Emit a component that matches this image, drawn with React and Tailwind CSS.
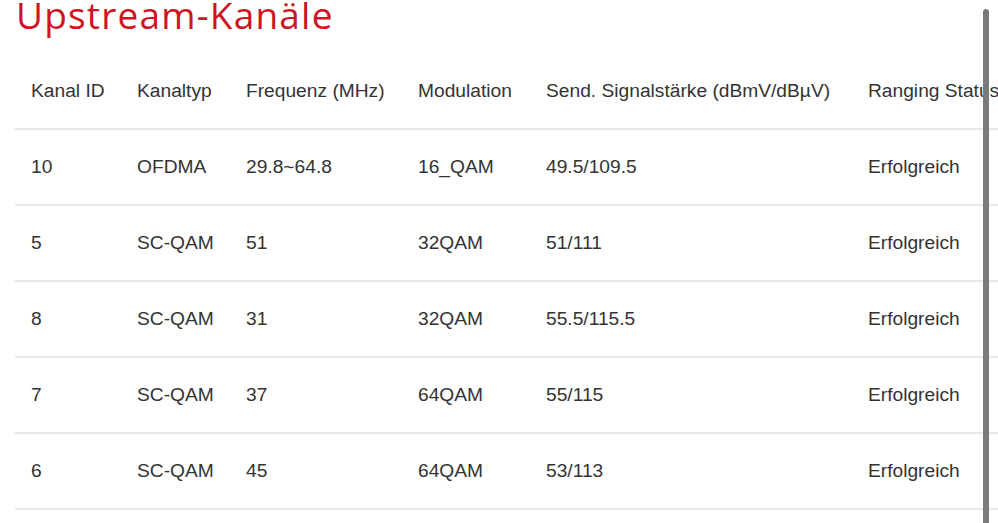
const columns = [
  { label: "Kanal ID", w: "w-[106px]" },
  { label: "Kanaltyp", w: "w-[109px]" },
  { label: "Frequenz (MHz)", w: "w-[172px]" },
  { label: "Modulation", w: "w-[128px]" },
  { label: "Send. Signalstärke (dBmV/dBµV)", w: "w-[322px]" },
  { label: "Ranging Status", w: "w-[200px]" },
];

const rows = [
  ["10", "OFDMA", "29.8~64.8", "16_QAM", "49.5/109.5", "Erfolgreich"],
  ["5", "SC-QAM", "51", "32QAM", "51/111", "Erfolgreich"],
  ["8", "SC-QAM", "31", "32QAM", "55.5/115.5", "Erfolgreich"],
  ["7", "SC-QAM", "37", "64QAM", "55/115", "Erfolgreich"],
  ["6", "SC-QAM", "45", "64QAM", "53/113", "Erfolgreich"],
];

export default function App() {
  return (
    <div className="relative h-[523px] w-[998px] overflow-hidden bg-white font-['Liberation_Sans',Arial,sans-serif] text-[#333]">
      {/* Title */}
      <h2 className="-mt-[4px] pl-[16px] font-['Open_Sans',sans-serif] text-[37px] leading-[37px] tracking-[1.2px] text-[#cf1322]">
        Upstream-Kanäle
      </h2>

      {/* Table */}
      <div className="ml-[15px] mt-[21px] w-[1100px]">
        <div className="flex h-[74px] items-center text-[19.2px] whitespace-nowrap">
          {columns.map((c) => (
            <div key={c.label} className={`${c.w} shrink-0 pl-[16px]`}>
              {c.label}
            </div>
          ))}
        </div>
        {rows.map((r, i) => (
          <div
            key={i}
            className="flex h-[76px] items-center border-t-2 border-[#e8e8e8] text-[19.2px] whitespace-nowrap"
          >
            {r.map((cell, j) => (
              <div key={j} className={`${columns[j].w} shrink-0 pl-[16px]`}>
                {cell}
              </div>
            ))}
          </div>
        ))}
        <div className="border-t-2 border-[#e8e8e8]" />
      </div>

      {/* Overlay scrollbar */}
      <div className="absolute left-[983px] top-[9px] h-[530px] w-[6px] rounded-t-full bg-[#7a7a7a]" />
    </div>
  );
}
